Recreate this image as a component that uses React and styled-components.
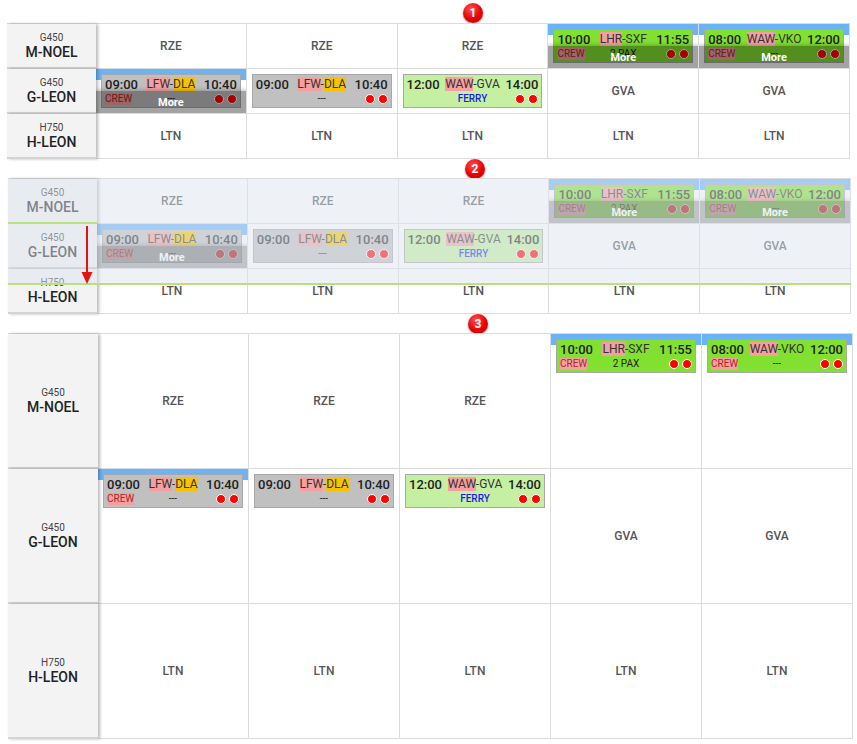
import React from 'react';
import styled, { createGlobalStyle } from 'styled-components';

const GlobalStyle = createGlobalStyle`
  html, body {
    margin: 0;
    padding: 0;
    background: #fff;
  }
  body {
    font-family: Roboto, "Noto Sans", Arial, sans-serif;
    color: #222;
  }
`;

const Page = styled.div`
  width: 857px;
  height: 744px;
  padding-top: 3px;
  box-sizing: border-box;
  overflow: hidden;
`;

const MarkerRow = styled.div`
  height: ${p => p.$h}px;
  padding-left: ${p => p.$left}px;
`;

const Marker = styled.div`
  width: 20px;
  height: 20px;
  border-radius: 50%;
  background: radial-gradient(circle at 40% 30%, #ff5050, #e80000 55%, #b80000);
  box-shadow: 0 1px 2px rgba(0, 0, 0, 0.45);
  color: #fff;
  font-size: 12px;
  font-weight: 700;
  line-height: 20px;
  text-align: center;
`;

const Table = styled.div`
  position: relative;
  margin-left: ${p => p.$left}px;
  width: ${p => p.$width}px;
  display: grid;
  grid-template-columns: ${p => p.$head}px repeat(5, 1fr);
  grid-auto-rows: ${p => p.$rowH}px;
  border-top: 1px solid #dcdcdc;
`;

const HeadCell = styled.div`
  position: relative;
  z-index: 1;
  background: #f3f3f3;
  border-bottom: 2px solid #d4d4d4;
  box-shadow: 2px 0 3px rgba(0, 0, 0, 0.28);
  display: flex;
  flex-direction: column;
  align-items: center;
  justify-content: center;
`;

const PlaneType = styled.div`
  font-size: 10px;
  line-height: 12px;
  color: #444;
`;

const Reg = styled.div`
  font-size: 14px;
  line-height: 16px;
  font-weight: 500;
  color: #222;
`;

const Cell = styled.div`
  position: relative;
  overflow: hidden;
  border-right: 1px solid #dcdcdc;
  border-bottom: 1px solid #dcdcdc;
  display: flex;
  justify-content: center;
  align-items: ${p => (p.$top ? 'flex-start' : 'center')};
  padding: ${p => (p.$top ? '5px 5px 0' : '0')};
  background: ${p => (p.$marked ? 'linear-gradient(#6bb3f8 0 11px, #fff 11px)' : '#fff')};
  font-size: 12px;
  font-weight: 500;
  color: #555;
`;

const tones = {
  gray: '#c0c0c0',
  green: '#82e030',
  light: '#c5f0a1',
};

const Card = styled.div`
  width: 100%;
  box-sizing: border-box;
  background: ${p => tones[p.$tone]};
  border: 1px solid #a8a8a8;
  padding: 1px 3px 2px;
  font-weight: 400;
`;

const CardRow = styled.div`
  display: grid;
  grid-template-columns: 1fr auto 1fr;
  align-items: center;
  height: ${p => p.$h}px;
`;

const Time = styled.span`
  justify-self: ${p => p.$side};
  font-size: 13px;
  font-weight: 500;
  color: #222;
`;

const Route = styled.span`
  font-size: 12px;
  font-weight: 400;
  color: #333;
`;

const Hl = styled.span`
  background: ${p => (p.$color === 'yellow' ? '#f7c300' : '#f5a0a0')};
`;

const Crew = styled.span`
  justify-self: start;
  font-size: 10px;
  line-height: 12px;
  color: #a82828;
  background: #f5a0a0;
`;

const Note = styled.span`
  font-size: 10px;
  font-weight: ${p => (p.$ferry ? 500 : 400)};
  color: ${p => (p.$ferry ? '#1c1cf0' : '#222')};
`;

const Dots = styled.span`
  justify-self: end;
  display: flex;
  gap: 3px;
`;

const Dot = styled.span`
  width: 8px;
  height: 8px;
  border-radius: 50%;
  background: #ff0000;
  border: 1px solid #fff;
`;

const MoreBar = styled.div`
  position: absolute;
  left: 0;
  right: 0;
  bottom: 0;
  height: 22px;
  background: rgba(0, 0, 0, 0.36);
  box-shadow: 0 0 4px 1px rgba(0, 0, 0, 0.25);
  color: #fff;
  font-size: 11px;
  font-weight: 700;
  line-height: 23px;
  text-align: center;
`;

const DragShade = styled.div`
  position: absolute;
  left: 0;
  right: 0;
  top: 0;
  height: ${p => p.$h}px;
  box-sizing: border-box;
  background: rgba(222, 229, 240, 0.5);
  border-bottom: 2px solid #b9e27f;
  z-index: 3;
`;

const DragStart = styled.div`
  position: absolute;
  left: 0;
  top: 43px;
  width: ${p => p.$w}px;
  height: 2px;
  background: #b9e27f;
  z-index: 4;
`;

const Arrow = styled.svg`
  position: absolute;
  left: 73px;
  top: 47px;
  z-index: 5;
`;

const rows = [
  {
    type: 'G450',
    reg: 'M-NOEL',
    cells: [
      { text: 'RZE' },
      { text: 'RZE' },
      { text: 'RZE' },
      {
        marked: true,
        more: true,
        card: { tone: 'green', dep: '10:00', from: 'LHR', fromHl: 'pink', to: 'SXF', arr: '11:55', crew: true, note: '2 PAX' },
      },
      {
        marked: true,
        more: true,
        card: { tone: 'green', dep: '08:00', from: 'WAW', fromHl: 'pink', to: 'VKO', arr: '12:00', crew: true, note: '---' },
      },
    ],
  },
  {
    type: 'G450',
    reg: 'G-LEON',
    cells: [
      {
        marked: true,
        more: true,
        card: { tone: 'gray', dep: '09:00', from: 'LFW', fromHl: 'pink', to: 'DLA', toHl: 'yellow', arr: '10:40', crew: true, note: '---' },
      },
      {
        card: { tone: 'gray', dep: '09:00', from: 'LFW', fromHl: 'pink', to: 'DLA', toHl: 'yellow', arr: '10:40', note: '---' },
      },
      {
        card: { tone: 'light', dep: '12:00', from: 'WAW', fromHl: 'pink', to: 'GVA', arr: '14:00', note: 'FERRY', ferry: true },
      },
      { text: 'GVA' },
      { text: 'GVA' },
    ],
  },
  {
    type: 'H750',
    reg: 'H-LEON',
    cells: [{ text: 'LTN' }, { text: 'LTN' }, { text: 'LTN' }, { text: 'LTN' }, { text: 'LTN' }],
  },
];

const Place = ({ code, hl }) => (hl ? <Hl $color={hl}>{code}</Hl> : <>{code}</>);

const FlightCard = ({ f }) => (
  <Card $tone={f.tone}>
    <CardRow $h={16}>
      <Time $side="start">{f.dep}</Time>
      <Route>
        <Place code={f.from} hl={f.fromHl} />-<Place code={f.to} hl={f.toHl} />
      </Route>
      <Time $side="end">{f.arr}</Time>
    </CardRow>
    <CardRow $h={13}>
      {f.crew ? <Crew>CREW</Crew> : <span />}
      <Note $ferry={f.ferry}>{f.note}</Note>
      <Dots>
        <Dot />
        <Dot />
      </Dots>
    </CardRow>
  </Card>
);

const Schedule = ({ left, width, head, rowH, compact, children }) => (
  <Table $left={left} $width={width} $head={head} $rowH={rowH}>
    {rows.map(r => (
      <React.Fragment key={r.reg}>
        <HeadCell>
          <PlaneType>{r.type}</PlaneType>
          <Reg>{r.reg}</Reg>
        </HeadCell>
        {r.cells.map((c, i) =>
          c.card ? (
            <Cell key={i} $top $marked={c.marked}>
              <FlightCard f={c.card} />
              {compact && c.more && <MoreBar>More</MoreBar>}
            </Cell>
          ) : (
            <Cell key={i}>{c.text}</Cell>
          )
        )}
      </React.Fragment>
    ))}
    {children}
  </Table>
);

export default function App() {
  return (
    <Page>
      <GlobalStyle />
      <MarkerRow $h={20} $left={463}>
        <Marker>1</Marker>
      </MarkerRow>
      <Schedule left={7} width={843} head={89} rowH={45} compact />

      <MarkerRow $h={19} $left={465}>
        <Marker>2</Marker>
      </MarkerRow>
      <Schedule left={8} width={843} head={89} rowH={45} compact>
        <DragShade $h={106} />
        <DragStart $w={89} />
        <Arrow width="12" height="60" viewBox="0 0 12 60">
          <line x1="6" y1="0" x2="6" y2="49" stroke="#e31313" strokeWidth="2" />
          <polygon points="0.5,46 11.5,46 6,58" fill="#e31313" />
        </Arrow>
      </Schedule>

      <MarkerRow $h={19} $left={468}>
        <Marker>3</Marker>
      </MarkerRow>
      <Schedule left={8} width={845} head={90} rowH={135} />
    </Page>
  );
}
